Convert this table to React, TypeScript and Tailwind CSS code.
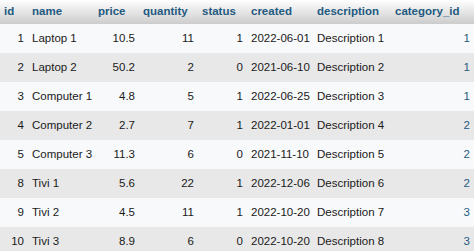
const rows = [
  { id: 1, name: "Laptop 1", price: "10.5", quantity: 11, status: 1, created: "2022-06-01", description: "Description 1", category_id: 1 },
  { id: 2, name: "Laptop 2", price: "50.2", quantity: 2, status: 0, created: "2021-06-10", description: "Description 2", category_id: 1 },
  { id: 3, name: "Computer 1", price: "4.8", quantity: 5, status: 1, created: "2022-06-25", description: "Description 3", category_id: 1 },
  { id: 4, name: "Computer 2", price: "2.7", quantity: 7, status: 1, created: "2022-01-01", description: "Description 4", category_id: 2 },
  { id: 5, name: "Computer 3", price: "11.3", quantity: 6, status: 0, created: "2021-11-10", description: "Description 5", category_id: 2 },
  { id: 8, name: "Tivi 1", price: "5.6", quantity: 22, status: 1, created: "2022-12-06", description: "Description 6", category_id: 2 },
  { id: 9, name: "Tivi 2", price: "4.5", quantity: 11, status: 1, created: "2022-10-20", description: "Description 7", category_id: 3 },
  { id: 10, name: "Tivi 3", price: "8.9", quantity: 6, status: 0, created: "2022-10-20", description: "Description 8", category_id: 3 },
];

const App = () => {
  return (
    <div className="w-[474px] h-[251px] overflow-hidden bg-white font-['Liberation_Sans',Arial,sans-serif] text-[11.5px]">
      <table className="w-[474px] table-fixed border-collapse whitespace-nowrap">
        <colgroup>
          <col className="w-[28px]" />
          <col className="w-[66px]" />
          <col className="w-[45px]" />
          <col className="w-[59px]" />
          <col className="w-[49px]" />
          <col className="w-[66px]" />
          <col className="w-[78px]" />
          <col className="w-[83px]" />
        </colgroup>
        <thead>
          <tr className="h-[24px] bg-gradient-to-b from-white to-[#cccccc] text-[#235a81] font-bold text-left">
            <th className="px-1 font-bold">id</th>
            <th className="px-1 font-bold">name</th>
            <th className="px-1 font-bold">price</th>
            <th className="px-1 font-bold">quantity</th>
            <th className="px-1 font-bold">status</th>
            <th className="px-1 font-bold">created</th>
            <th className="px-1 font-bold">description</th>
            <th className="px-1 font-bold">category_id</th>
          </tr>
        </thead>
        <tbody className="text-[#1a1a1a]">
          {rows.map((r, i) => (
            <tr key={r.id} className={"h-[29px] " + (i % 2 === 0 ? "bg-[#f8f9fa]" : "bg-[#e8e8e8]")}>
              <td className="px-1 text-right">{r.id}</td>
              <td className="px-1">{r.name}</td>
              <td className="px-1 text-right">{r.price}</td>
              <td className="px-1 text-right">{r.quantity}</td>
              <td className="px-1 text-right">{r.status}</td>
              <td className="px-1">{r.created}</td>
              <td className="px-1">{r.description}</td>
              <td className="px-1 text-right text-[#235a81]">{r.category_id}</td>
            </tr>
          ))}
        </tbody>
      </table>
    </div>
  );
};

export default App;
